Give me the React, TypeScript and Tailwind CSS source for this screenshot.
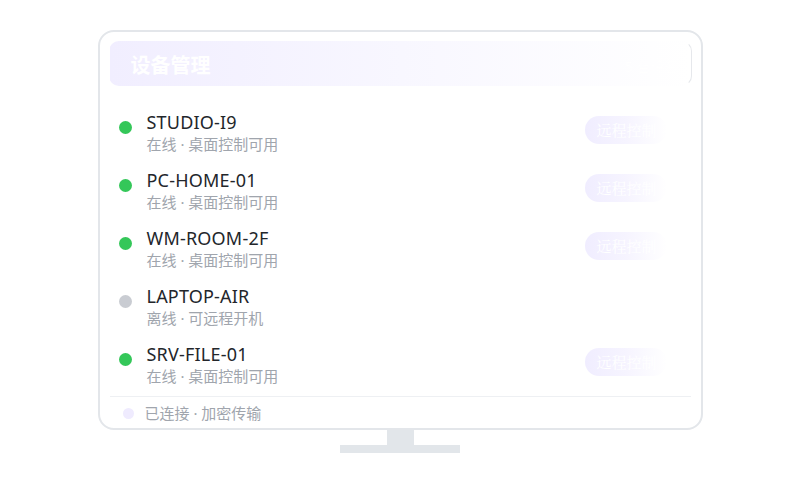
import React from "react";

type Device = {
  name: string;
  online: boolean;
};

const devices: Device[] = [
  { name: "STUDIO-I9", online: true },
  { name: "PC-HOME-01", online: true },
  { name: "WM-ROOM-2F", online: true },
  { name: "LAPTOP-AIR", online: false },
  { name: "SRV-FILE-01", online: true },
];

const sans = { fontFamily: '"Noto Sans", "Noto Sans CJK SC", sans-serif' };

function DeviceRow({ device }: { device: Device }) {
  return (
    <div className="flex h-[44px] items-start">
      <span
        className={
          device.online
            ? "mt-[11px] size-[13px] shrink-0 rounded-full bg-[#34c759]"
            : "mt-[11px] size-[13px] shrink-0 rounded-full bg-[#c9ccd2]"
        }
      />
      <div className="ml-[15px] flex flex-col">
        <span className="text-[18px] leading-[24px] tracking-[0.2px] text-[#23262b]">
          {device.name}
        </span>
        <span className="text-[15px] leading-[20px] text-[#a0a5ad]">
          {device.online ? "在线 · 桌面控制可用" : "离线 · 可远程开机"}
        </span>
      </div>
      {device.online && (
        <button
          className="mr-[25px] ml-auto mt-[6px] flex h-[28px] w-[82px] items-center rounded-full bg-linear-to-r from-[#f0edff] via-[#f6f4ff] to-white pl-[12px] text-[15px] text-white"
          style={{ fontFamily: '"Noto Serif CJK SC", serif' }}
        >
          远程控制
        </button>
      )}
    </div>
  );
}

export default function App() {
  return (
    <div
      className="flex h-[500px] w-full flex-col items-center bg-white pt-[30px]"
      style={sans}
    >
      <div className="flex h-[400px] w-[605px] flex-col rounded-[16px] border-2 border-[#e3e6ea] bg-white px-[9px] pt-[9px] pb-[5px]">
        <div className="flex h-[45px] items-center justify-between rounded-[10px] border border-transparent border-r-[#e6e8ec] bg-linear-to-r from-[#f1eeff] via-[#f8f7ff] to-white pt-[5px] pl-[21px] pr-[12px]">
          <span className="text-[20px] font-bold text-white">设备管理</span>
          <span className="text-[14px] text-white">5 台设备</span>
        </div>

        <div className="mt-[24px] flex flex-col gap-[14px] pl-[10px]">
          {devices.map((d) => (
            <DeviceRow key={d.name} device={d} />
          ))}
        </div>

        <div className="mx-[1px] mt-[10px] h-px bg-[#eef0f3]" />

        <div className="mt-[6px] flex h-[20px] items-center pl-[14px]">
          <span className="size-[11px] rounded-full bg-[#efebfe]" />
          <span className="ml-[11px] text-[15px] leading-[20px] text-[#a0a5ad]">
            已连接 · 加密传输
          </span>
        </div>
      </div>

      <div className="h-[15px] w-[27px] bg-[#e2e6ea]" />
      <div className="h-[8px] w-[120px] bg-[#e2e6ea]" />
    </div>
  );
}
